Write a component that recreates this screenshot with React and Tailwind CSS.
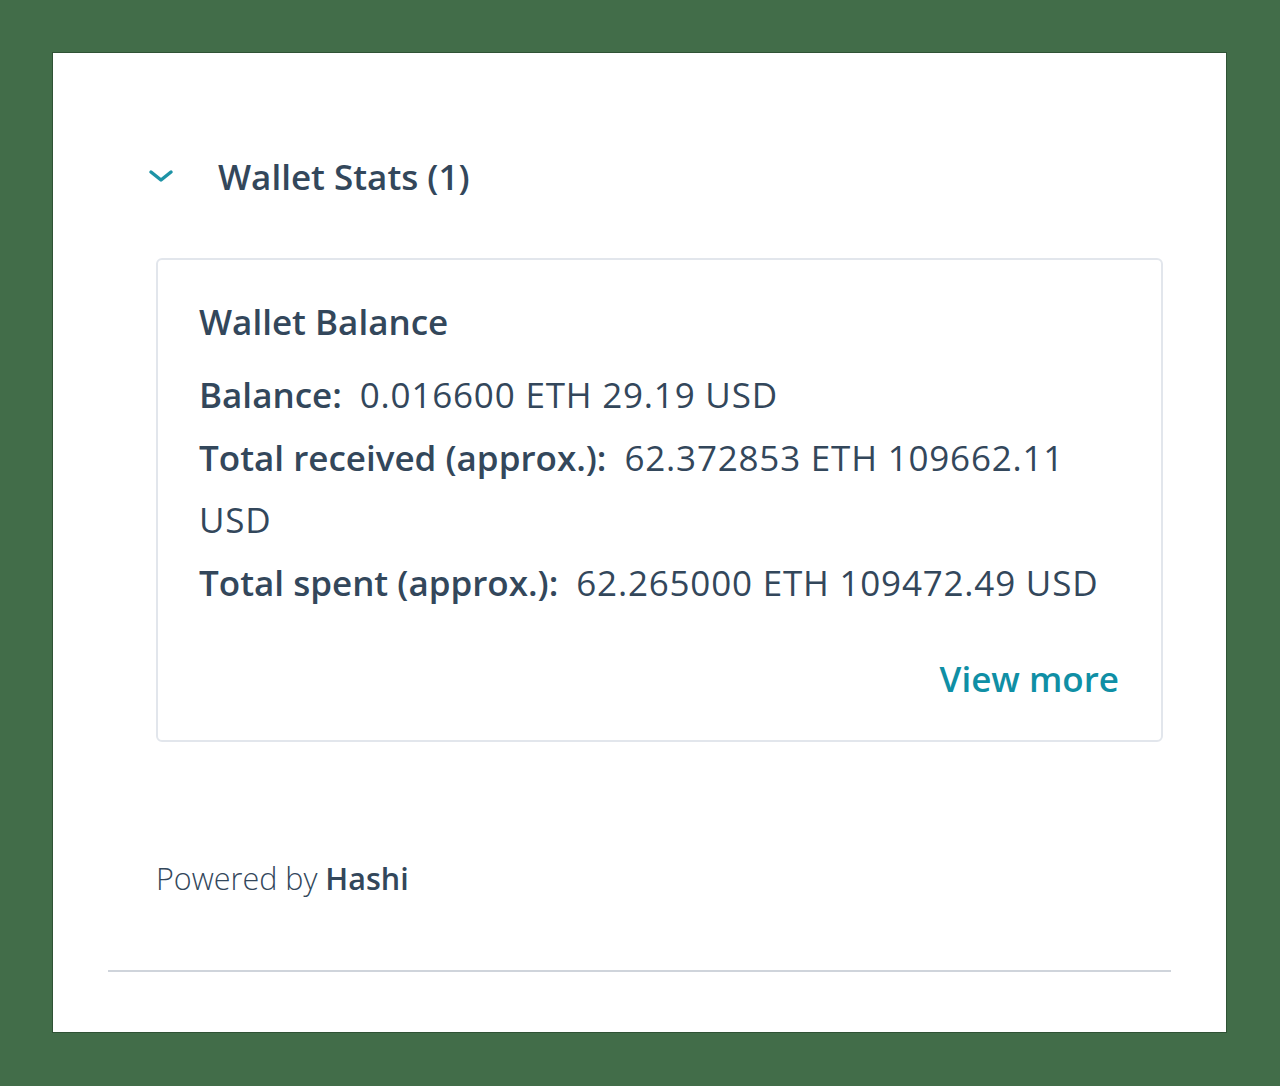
export default function App() {
  const rows = [
    { label: "Balance:", value: "0.016600 ETH 29.19 USD" },
    { label: "Total received (approx.):", value: "62.372853 ETH 109662.11 USD" },
    { label: "Total spent (approx.):", value: "62.265000 ETH 109472.49 USD" },
  ];

  return (
    <div
      className="min-h-[1086px] w-full bg-[#426d49] pt-[53px] pl-[53px]"
      style={{ fontFamily: "'Open Sans', 'Noto Sans', sans-serif" }}
    >
      <div className="flex h-[979px] w-[1173px] flex-col bg-white pt-[102px] text-[#33475b] shadow-[0_0_0_1px_#2f5235]">
        {/* section header */}
        <div className="flex h-[44px] items-center pl-[95px]">
          <svg width="26" height="16" viewBox="0 0 26 16" className="mt-[-2px]">
            <path
              d="M3 4 L13 12 L23 4"
              fill="none"
              stroke="#1d93a6"
              strokeWidth="3.5"
              strokeLinecap="round"
              strokeLinejoin="round"
            />
          </svg>
          <h2 className="ml-[44px] text-[35px] font-semibold leading-[44px]">Wallet Stats (1)</h2>
        </div>

        {/* card */}
        <div className="mt-[59px] ml-[103px] w-[1007px] rounded-[6px] border-2 border-[#e2e6ec] pt-[40px] pr-[42px] pb-[39px] pl-[41px]">
          <h3 className="text-[35px] font-semibold leading-[44px]">Wallet Balance</h3>
          <div className="mt-[20px]">
            {rows.map((r) => (
              <p key={r.label} className="text-[35px] leading-[62.5px] tracking-[0.8px]">
                <span className="mr-[18px] font-semibold tracking-normal">{r.label}</span>
                {r.value}
              </p>
            ))}
          </div>
          <div className="mt-[43px] flex justify-end">
            <a className="text-[35px] font-semibold leading-[44px] text-[#0f8fa5]">View more</a>
          </div>
        </div>

        {/* footer */}
        <p className="mt-[116px] ml-[103px] text-[30.5px] font-light leading-[40px]">
          Powered by <span className="font-semibold">Hashi</span>
        </p>
        <div className="mt-[72px] ml-[55px] h-[2px] w-[1063px] bg-[#cfd4db]" />
      </div>
    </div>
  );
}
